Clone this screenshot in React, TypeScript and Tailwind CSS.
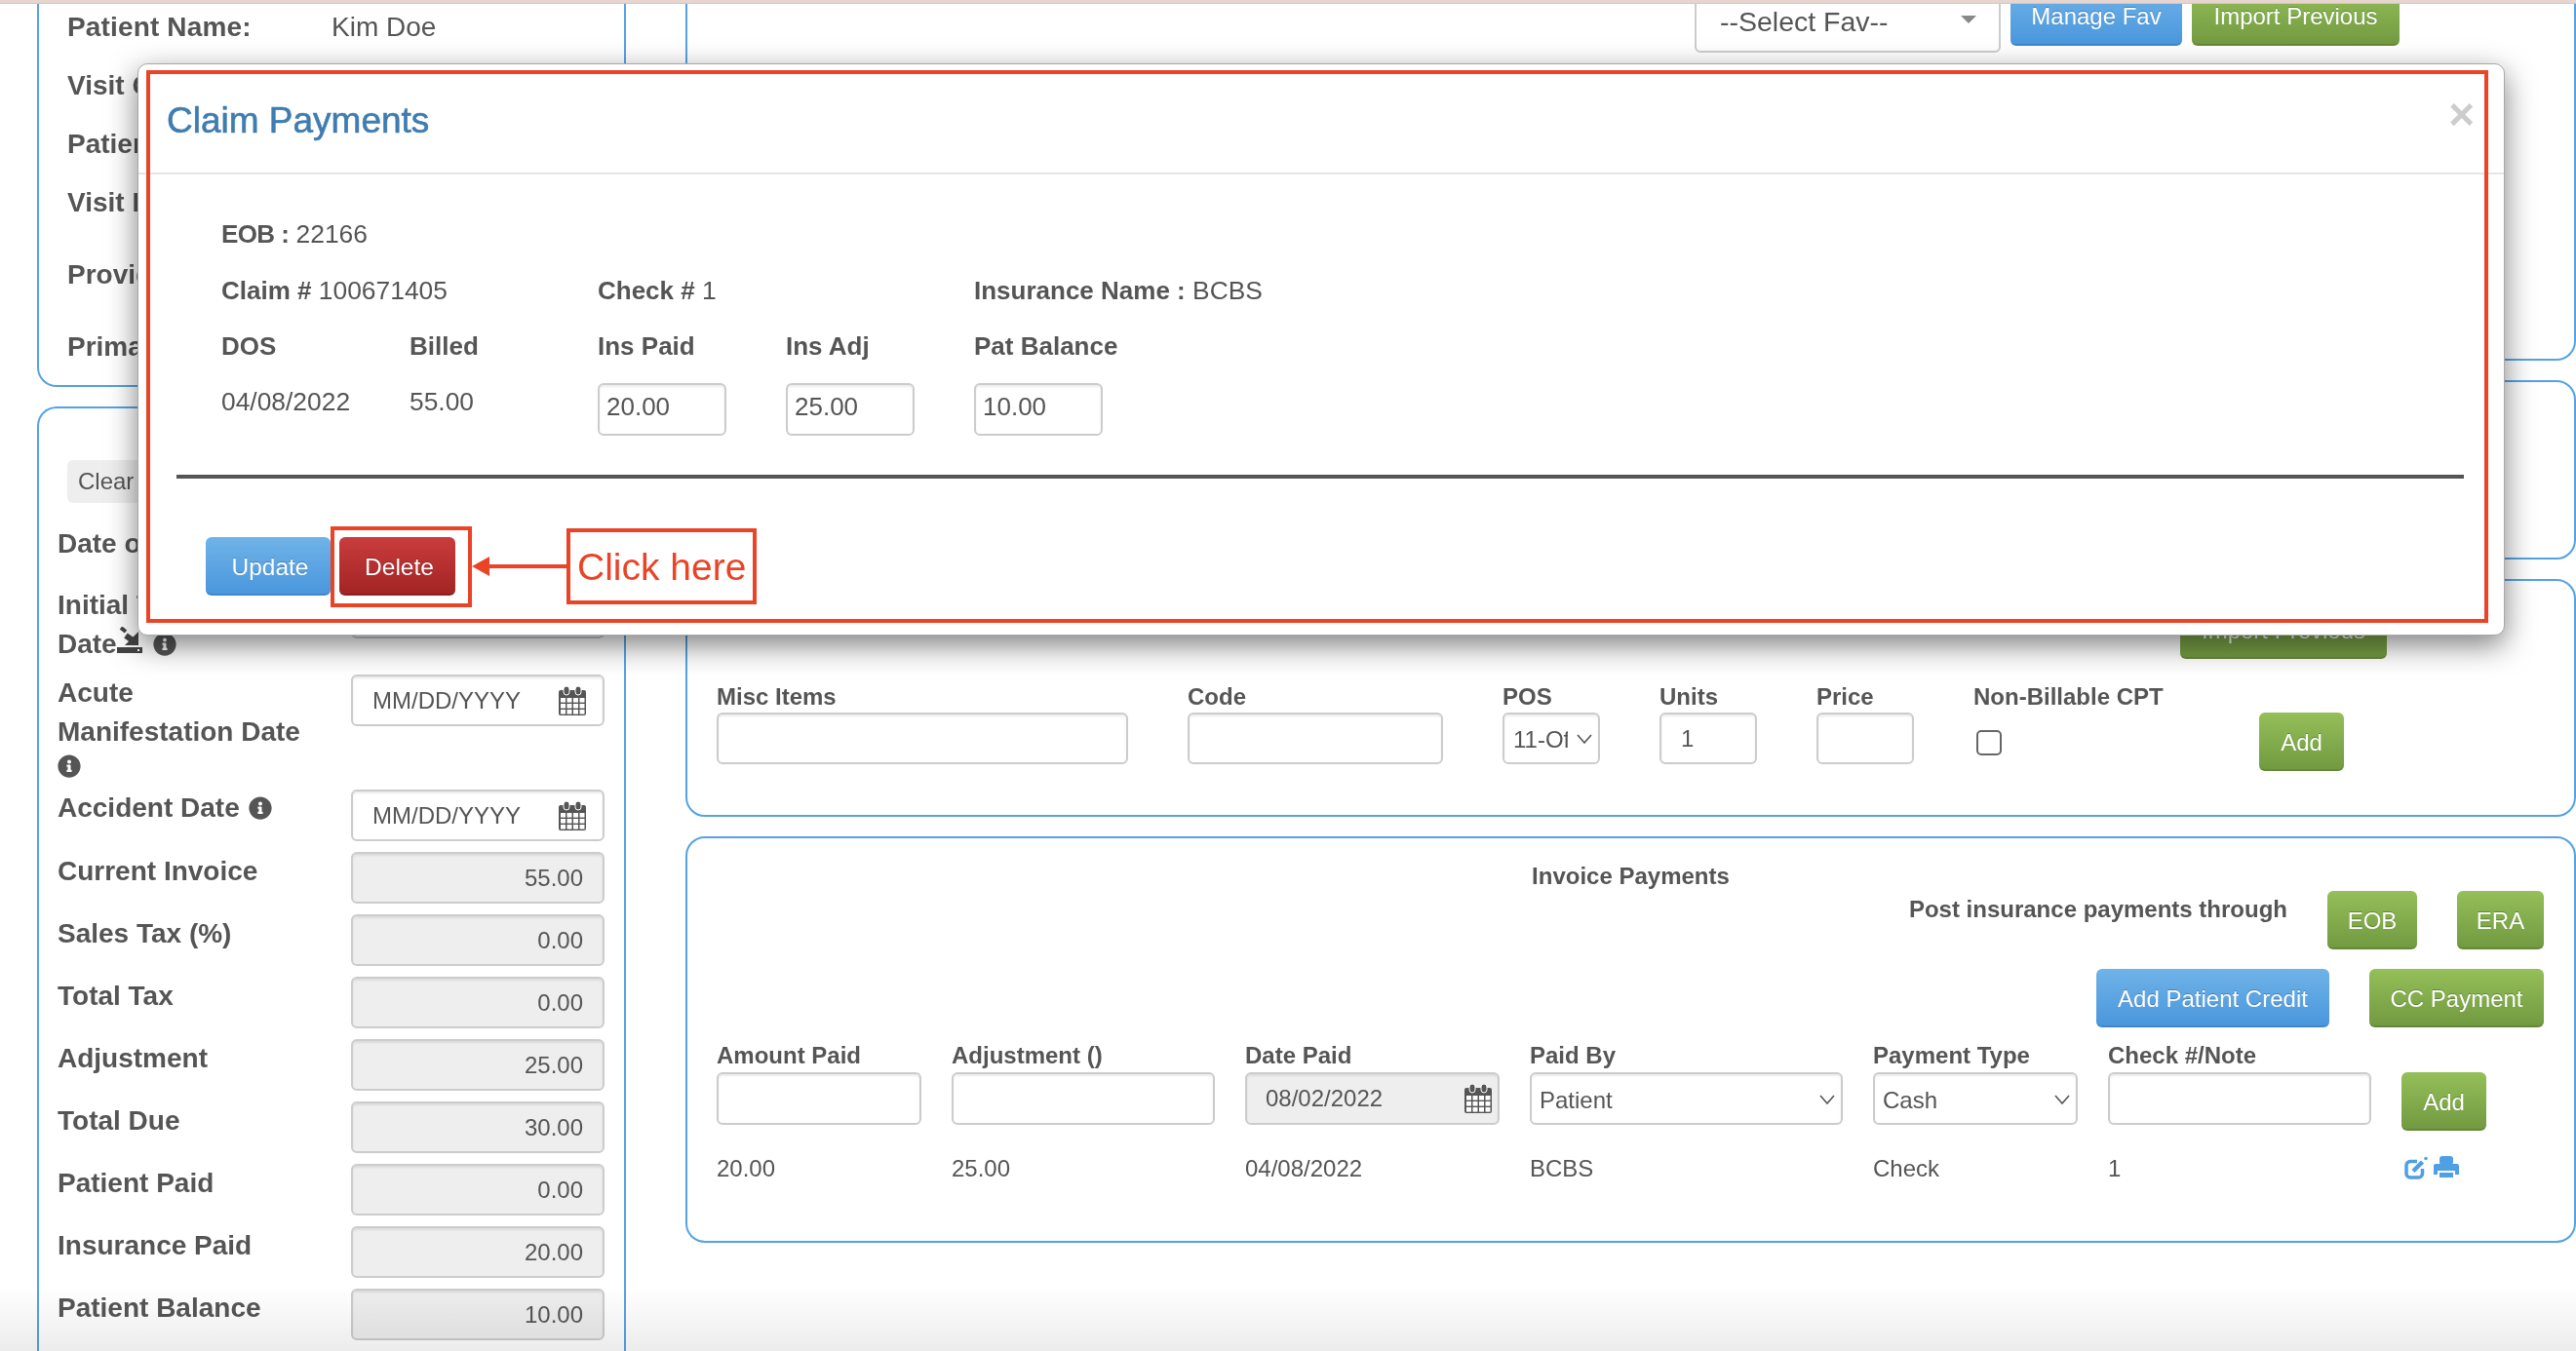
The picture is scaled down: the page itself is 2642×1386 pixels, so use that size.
import { FaInfoCircle } from "react-icons/fa";

const btnBase =
  "flex items-center justify-center h-[60px] shrink-0 pt-[3px] border-b-2 rounded-[6px] text-white text-[24px] leading-[20px] [text-shadow:0_-1px_0_rgba(0,0,0,0.25)]";
const btnBlue = `${btnBase} bg-linear-to-b from-[#6fb3e8] to-[#4a97dd] border-[#3f86cc]`;
const btnGreen = `${btnBase} bg-linear-to-b from-[#95bf59] to-[#729a41] border-[#64883a]`;
const btnRed = `${btnBase} bg-linear-to-b from-[#ca3c3c] to-[#a32424] border-[#8f1f1f]`;

const inputBase =
  "block w-full border-2 border-[#ccc] rounded-[6px] outline-none text-[24px] text-[#555] shadow-[inset_0_2px_2px_rgba(0,0,0,0.075)]";

function CalendarIcon({ className }: { className: string }) {
  return (
    <svg viewBox="0 0 28 30" className={className}>
      <path d="M2 4h24a2 2 0 0 1 2 2v22a2 2 0 0 1-2 2H2a2 2 0 0 1-2-2V6a2 2 0 0 1 2-2z" fill="#555" />
      <rect x="5" y="0" width="6" height="9" rx="3" fill="#555" stroke="#fff" strokeWidth="1" />
      <rect x="17" y="0" width="6" height="9" rx="3" fill="#555" stroke="#fff" strokeWidth="1" />
      {[12, 18, 24].map((y) =>
        [2, 8.5, 15, 21.5].map((x) => (
          <rect key={`${x}-${y}`} x={x} y={y} width="5" height="4.6" fill="#fff" />
        ))
      )}
    </svg>
  );
}

function Chevron({ className }: { className: string }) {
  return (
    <svg viewBox="0 0 16 10" className={className} fill="none" stroke="#555" strokeWidth="1.6">
      <path d="M1 1l7 8 7-8" />
    </svg>
  );
}

function DateIcon() {
  return (
    <svg viewBox="0 0 26 27" className="w-[26px] h-[27px] -mt-[9px]" fill="#444">
      <path d="M4 1l5 4" stroke="#444" strokeWidth="4" />
      <path d="M9 9l7 5" stroke="#444" strokeWidth="6" />
      <path d="M22 5v14H8z" />
      <path d="M0 21h26v6H0z" />
      <rect x="21" y="23" width="2" height="2" fill="#fff" />
    </svg>
  );
}

function EditIcon() {
  return (
    <svg viewBox="0 0 24 24" className="w-[24px] h-[24px]" fill="none" stroke="#4f9fe5">
      <path d="M13 5.500H6a4 4 0 0 0-4 4V18a4 4 0 0 0 4 4h8.500a4 4 0 0 0 4-4v-5" strokeWidth="3.500" />
      <path d="M9 15.500L18.500 6" strokeWidth="4.500" />
      <circle cx="22" cy="2.500" r="1.800" fill="#4f9fe5" stroke="none" />
    </svg>
  );
}

function PrintIcon() {
  return (
    <svg viewBox="0 0 26 24" className="w-[26px] h-[24px]" fill="#4f9fe5">
      <rect x="6" y="0" width="14" height="9" rx="3" />
      <path d="M0 10q0-2 2-2h22q2 0 2 2v9h-4v-4H4v4H0z" />
      <rect x="6" y="17" width="14" height="5" />
    </svg>
  );
}

function Panel({ className, children }: { className: string; children?: React.ReactNode }) {
  return <div className={`border-[#55a2e3] ${className}`}>{children}</div>;
}

function TopInfoRow({ label, value, className = "" }: { label: string; value?: string; className?: string }) {
  return (
    <div className={`flex items-center h-[40px] ${className}`}>
      <span className="w-[271px] shrink-0 font-bold whitespace-nowrap">{label}</span>
      {value && <span className="tracking-normal">{value}</span>}
    </div>
  );
}

function TotalRow({ label, value }: { label: string; value: string }) {
  return (
    <div className="flex h-[64px]">
      <div className="w-[301px] shrink-0 font-bold text-[28px] leading-[40px]">{label}</div>
      <input
        readOnly
        defaultValue={value}
        className={`${inputBase} !w-[260px] h-[53px] bg-[#eee] text-right pr-[20px]`}
      />
    </div>
  );
}

function DateField({ icon }: { icon?: boolean }) {
  return (
    <div className="relative w-[260px] h-[53px] shrink-0">
      <input placeholder="MM/DD/YYYY" className={`${inputBase} h-full pl-[20px] placeholder:text-[#555]`} />
      {icon && <CalendarIcon className="absolute right-[19px] top-[12px] w-[28px] h-[30px]" />}
    </div>
  );
}

function Field({ label, width, children }: { label: string; width: string; children?: React.ReactNode }) {
  return (
    <div className={`flex flex-col ${width}`}>
      <div className="font-bold text-[24px] leading-[30px] mb-[1px] whitespace-nowrap">{label}</div>
      {children}
    </div>
  );
}

function PaymentField({ label, children }: { label: string; children?: React.ReactNode }) {
  return (
    <div className="flex flex-col">
      <div className="font-bold text-[24px] leading-[30px] mb-[2px] whitespace-nowrap">{label}</div>
      {children}
    </div>
  );
}

function SelectBox({ value }: { value: string }) {
  return (
    <div className="relative h-[54px]">
      <select defaultValue={value} className={`${inputBase} h-full appearance-none bg-white pl-[8px] pt-[3px]`}>
        <option>{value}</option>
      </select>
      <Chevron className="absolute right-[8px] top-[23px] w-[16px] h-[10px]" />
    </div>
  );
}

export default function App() {
  return (
    <div className="relative w-[2642px] h-[1386px] overflow-hidden bg-white font-['Liberation_Sans',Arial,sans-serif] text-[#555] text-[24px]">
      <div className="h-[4px] bg-[#e7d5cf] border-b border-[#d0c8c4]" />

      <div className="flex items-start pl-[38px] gap-[61px]">
        {/* left column */}
        <div className="flex flex-col w-[604px] shrink-0 gap-[20px]">
          <Panel className="h-[393px] border-x-2 border-b-2 rounded-b-[20px] pl-[29px] pt-[4px] text-[28px]">
            <TopInfoRow label="Patient Name:" value="Kim Doe" className="tracking-[0.15px]" />
            <TopInfoRow label="Visit Code" className="mt-[20px]" />
            <TopInfoRow label="Patient ID" className="mt-[20px]" />
            <TopInfoRow label="Visit Date" className="mt-[20px]" />
            <TopInfoRow label="Provider" className="mt-[34px]" />
            <TopInfoRow label="Primary" className="mt-[34px]" />
          </Panel>

          <Panel className="h-[1000px] border-x-2 border-t-2 rounded-t-[20px] pl-[19px]">
            <div className="ml-[10px] mt-[53px] w-[110px] h-[44px] flex items-center pl-[11px] bg-[#eee] rounded-[6px]">
              Clear
            </div>
            <div className="flex h-[63px] mt-[23px]">
              <div className="w-[301px] shrink-0 -mt-[1px] font-bold text-[28px] leading-[40px]">Date of Service</div>
              <DateField />
            </div>
            <div className="flex h-[90px]">
              <div className="w-[301px] shrink-0 -mt-[1px] font-bold text-[28px] leading-[40px]">
                Initial Treatment
                <div className="flex items-center">
                  Date
                  <DateIcon />
                  <FaInfoCircle className="w-[24px] h-[24px] ml-[11px]" />
                </div>
              </div>
              <DateField />
            </div>
            <div className="flex h-[118px]">
              <div className="w-[301px] shrink-0 -mt-[1px] font-bold text-[28px] leading-[40px]">
                Acute
                <br />
                Manifestation Date
                <FaInfoCircle className="w-[24px] h-[24px] mt-[3px]" />
              </div>
              <DateField icon />
            </div>
            <div className="flex h-[64px]">
              <div className="flex items-center gap-[9px] self-start w-[301px] shrink-0 -mt-[1px] font-bold text-[28px] leading-[40px]">
                Accident Date
                <FaInfoCircle className="w-[24px] h-[24px]" />
              </div>
              <DateField icon />
            </div>
            <TotalRow label="Current Invoice" value="55.00" />
            <TotalRow label="Sales Tax (%)" value="0.00" />
            <TotalRow label="Total Tax" value="0.00" />
            <TotalRow label="Adjustment" value="25.00" />
            <TotalRow label="Total Due" value="30.00" />
            <TotalRow label="Patient Paid" value="0.00" />
            <TotalRow label="Insurance Paid" value="20.00" />
            <TotalRow label="Patient Balance" value="10.00" />
            <TotalRow label="" value="" />
          </Panel>
        </div>

        {/* right column */}
        <div className="flex flex-col w-[1939px] shrink-0 gap-[20px]">
          <Panel className="h-[366px] border-x-2 border-b-2 rounded-b-[20px] overflow-hidden">
            <div className="flex items-start justify-end gap-[10px] pr-[179px]">
              <div className="relative w-[314px] h-[64px] -mt-[14px] pt-[12px] pl-[24px] border-2 border-[#ccc] rounded-[6px] text-[28.500px] leading-[36px]">
                --Select Fav--
                <div className="absolute right-[23px] top-[24px] w-0 h-0 border-x-[8px] border-x-transparent border-t-[8px] border-t-[#888]" />
              </div>
              <div className={`${btnBlue} w-[176px] -mt-[17px] !pt-[1px]`}>Manage Fav</div>
              <div className={`${btnGreen} w-[213px] -mt-[17px] !pt-[1px]`}>Import Previous</div>
            </div>
          </Panel>

          <Panel className="h-[184px] border-2 rounded-[20px]" />

          <Panel className="h-[244px] border-2 rounded-[20px]">
            <div className="flex justify-end pr-[192px] mt-[20px]">
              <div className={`${btnGreen} w-[212px]`}>Import Previous</div>
            </div>
            <div className="flex gap-[61px] pl-[30px] mt-[24px]">
              <Field label="Misc Items" width="w-[422px]">
                <input className={`${inputBase} h-[53px]`} />
              </Field>
              <Field label="Code" width="w-[262px]">
                <input className={`${inputBase} h-[53px]`} />
              </Field>
              <Field label="POS" width="w-[100px]">
                <div className="relative h-[53px]">
                  <select
                    defaultValue="11-Office"
                    className={`${inputBase} h-full appearance-none bg-white pl-[9px] pr-[31px] pt-[3px]`}
                  >
                    <option>11-Office</option>
                  </select>
                  <Chevron className="absolute right-[8px] top-[22px] w-[16px] h-[10px]" />
                </div>
              </Field>
              <Field label="Units" width="w-[100px]">
                <input defaultValue="1" className={`${inputBase} h-[53px] pl-[20px]`} />
              </Field>
              <Field label="Price" width="w-[100px]">
                <input className={`${inputBase} h-[53px]`} />
              </Field>
              <Field label="Non-Billable CPT" width="w-[232px]">
                <input
                  type="checkbox"
                  className="appearance-none w-[26px] h-[26px] mt-[18px] ml-[3px] border-2 border-[#666] rounded-[5px] bg-white"
                />
              </Field>
              <div className={`${btnGreen} w-[87px] mt-[31px]`}>Add</div>
            </div>
          </Panel>

          <Panel className="h-[417px] border-2 rounded-[20px]">
            <div className="mt-[24px] text-center font-bold leading-[30px]">Invoice Payments</div>
            <div className="flex justify-end gap-[41px] pr-[31px]">
              <div className="font-bold leading-[30px] mt-[4px]">Post insurance payments through</div>
              <div className={`${btnGreen} w-[92px]`}>EOB</div>
              <div className={`${btnGreen} w-[89px]`}>ERA</div>
            </div>
            <div className="flex justify-end gap-[41px] pr-[31px] mt-[20px]">
              <div className={`${btnBlue} w-[239px]`}>Add Patient Credit</div>
              <div className={`${btnGreen} w-[179px]`}>CC Payment</div>
            </div>
            <div className="grid grid-cols-[210px_270px_261px_321px_210px_270px_87px] gap-x-[31px] ml-[30px] mt-[14px]">
              <PaymentField label="Amount Paid">
                <input className={`${inputBase} h-[54px]`} />
              </PaymentField>
              <PaymentField label="Adjustment ()">
                <input className={`${inputBase} h-[54px]`} />
              </PaymentField>
              <PaymentField label="Date Paid">
                <div className="relative h-[54px]">
                  <input readOnly defaultValue="08/02/2022" className={`${inputBase} h-full bg-[#eee] pl-[19px]`} />
                  <CalendarIcon className="absolute right-[8px] top-[12px] w-[28px] h-[30px]" />
                </div>
              </PaymentField>
              <PaymentField label="Paid By">
                <SelectBox value="Patient" />
              </PaymentField>
              <PaymentField label="Payment Type">
                <SelectBox value="Cash" />
              </PaymentField>
              <PaymentField label="Check #/Note">
                <input className={`${inputBase} h-[54px]`} />
              </PaymentField>
              <div className={`${btnGreen} mt-[32px]`}>Add</div>

              <div className="col-span-7 grid grid-cols-subgrid mt-[24px] leading-[30px]">
                <span>20.00</span>
                <span>25.00</span>
                <span>04/08/2022</span>
                <span>BCBS</span>
                <span>Check</span>
                <span>1</span>
                <span className="flex items-center gap-[6px] pl-[3px] -mt-[2px]">
                  <EditIcon />
                  <PrintIcon />
                </span>
              </div>
            </div>
          </Panel>
        </div>
      </div>

      {/* fade at the bottom of the screenshot */}
      <div className="absolute left-0 right-0 bottom-0 h-[66px] bg-linear-to-b from-white to-[#ececec] mix-blend-multiply pointer-events-none" />

      {/* modal */}
      <div className="absolute left-[141px] top-[65px] w-[2428px] h-[587px] bg-white border border-[#a8a8a8] rounded-[10px] shadow-[0_10px_30px_rgba(0,0,0,0.5)] text-[26px]">
        <div className="flex justify-between h-[113px] border-b-2 border-[#e5e5e5] pl-[29px] pr-[30px]">
          <h4 className="text-[37px] leading-[42px] text-[#3f7cb0] mt-[37px] [-webkit-text-stroke:0.6px_#3f7cb0]">
            Claim Payments
          </h4>
          <span className="text-[46px] leading-[46px] font-bold text-[#ccc] mt-[28px]">×</span>
        </div>

        <div className="grid grid-cols-[193px_193px_193px_193px_193px] grid-rows-[58px_57px_53px_54px] ml-[85px] mt-[46px] leading-[30px] text-[26.400px] [&_b]:text-[26px]">
          <div className="col-span-5">
            <b className="tracking-[-0.6px]">EOB :</b> 22166
          </div>
          <div className="col-span-2">
            <b>Claim #</b> 100671405
          </div>
          <div className="col-span-2">
            <b>Check #</b> 1
          </div>
          <div>
            <span className="whitespace-nowrap">
              <b>Insurance Name :</b> BCBS
            </span>
          </div>
          <b>DOS</b>
          <b>Billed</b>
          <b>Ins Paid</b>
          <b>Ins Adj</b>
          <b>Pat Balance</b>
          <div className="mt-[4px]">04/08/2022</div>
          <div className="mt-[4px]">55.00</div>
          <input defaultValue="20.00" className={`${inputBase} !w-[132px] !text-[26px] h-[54px] pl-[7px] pb-[6px]`} />
          <input defaultValue="25.00" className={`${inputBase} !w-[132px] !text-[26px] h-[54px] pl-[7px] pb-[6px]`} />
          <input defaultValue="10.00" className={`${inputBase} !w-[132px] !text-[26px] h-[54px] pl-[7px] pb-[6px]`} />
        </div>

        <div className="ml-[39px] mt-[40px] w-[2346px] h-[4px] bg-[#555]" />

        <div className="flex gap-[9px] ml-[69px] mt-[60px]">
          <div className={`${btnBlue} w-[128px] pl-[4px] !text-[24.500px]`}>Update</div>
          <div className={`${btnRed} w-[119px] pl-[4px] !text-[24.500px]`}>Delete</div>
        </div>
      </div>

      {/* red annotations on top of the screenshot */}
      <div className="absolute left-[150px] top-[72px] w-[2402px] h-[567px] border-4 border-[#ea4326]" />
      <div className="absolute left-[339px] top-[540px] w-[145px] h-[83px] border-4 border-[#ea4326]" />
      <svg viewBox="0 0 99 20" className="absolute left-[484px] top-[571px] w-[99px] h-[20px]">
        <path d="M0 10L18 0v20z" fill="#ea4326" />
        <path d="M16 10h83" stroke="#ea4326" strokeWidth="4" />
      </svg>
      <div className="absolute left-[581px] top-[542px] w-[195px] h-[78px] border-4 border-[#ea4326] flex items-center pl-[7px] pt-[2px] text-[39px] text-[#ea4326]">
        Click here
      </div>
    </div>
  );
}
